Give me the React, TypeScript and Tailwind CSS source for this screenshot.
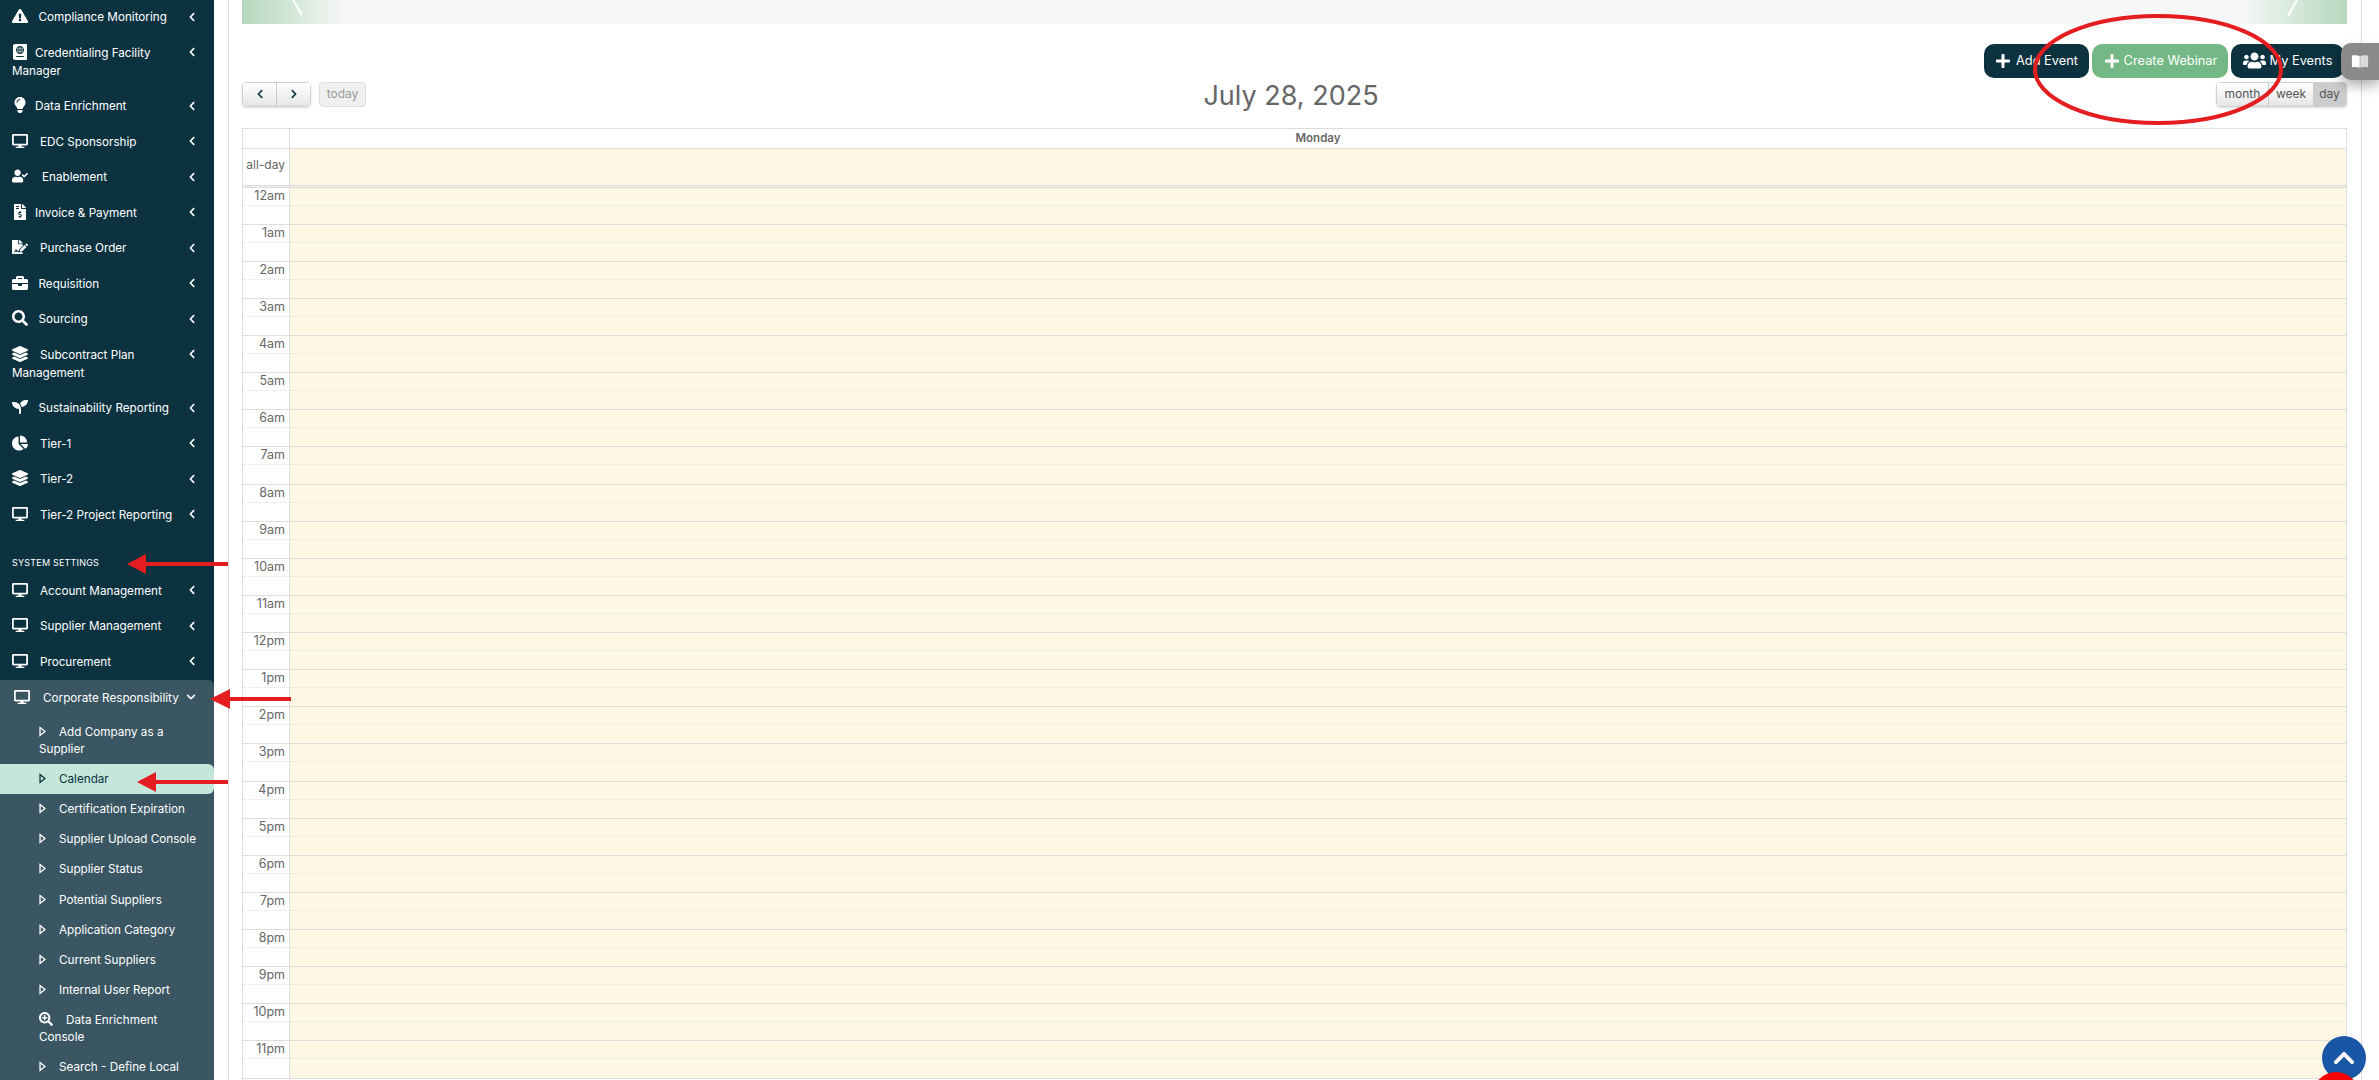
import { IconType } from 'react-icons';
import {
  FaExclamationTriangle, FaPassport, FaLightbulb, FaDesktop, FaUserCheck, FaFileInvoiceDollar,
  FaFileSignature, FaBriefcase, FaSearch, FaLayerGroup, FaSeedling, FaChartPie, FaChevronLeft,
  FaChevronRight, FaChevronDown, FaChevronUp, FaSearchPlus, FaPlus, FaUsers,
} from 'react-icons/fa';

type MenuItem = { label: string; icon: IconType; box: string };

const topItems: MenuItem[] = [
  { label: 'Compliance Monitoring', icon: FaExclamationTriangle, box: 'w-[26.5px]' },
  { label: 'Credentialing Facility Manager', icon: FaPassport, box: 'w-[23px]' },
  { label: 'Data Enrichment', icon: FaLightbulb, box: 'w-[23px]' },
  { label: 'EDC Sponsorship', icon: FaDesktop, box: 'w-[28px]' },
  { label: 'Enablement', icon: FaUserCheck, box: 'w-[30px]' },
  { label: 'Invoice & Payment', icon: FaFileInvoiceDollar, box: 'w-[23px]' },
  { label: 'Purchase Order', icon: FaFileSignature, box: 'w-[28px]' },
  { label: 'Requisition', icon: FaBriefcase, box: 'w-[26.5px]' },
  { label: 'Sourcing', icon: FaSearch, box: 'w-[26.5px]' },
  { label: 'Subcontract Plan Management', icon: FaLayerGroup, box: 'w-[28px]' },
  { label: 'Sustainability Reporting', icon: FaSeedling, box: 'w-[26.5px]' },
  { label: 'Tier-1', icon: FaChartPie, box: 'w-[28px]' },
  { label: 'Tier-2', icon: FaLayerGroup, box: 'w-[28px]' },
  { label: 'Tier-2 Project Reporting', icon: FaDesktop, box: 'w-[28px]' },
];

const settingsItems: MenuItem[] = [
  { label: 'Account Management', icon: FaDesktop, box: 'w-[28px]' },
  { label: 'Supplier Management', icon: FaDesktop, box: 'w-[28px]' },
  { label: 'Procurement', icon: FaDesktop, box: 'w-[28px]' },
];

const subItems = [
  'Add Company as a Supplier',
  'Calendar',
  'Certification Expiration',
  'Supplier Upload Console',
  'Supplier Status',
  'Potential Suppliers',
  'Application Category',
  'Current Suppliers',
  'Internal User Report',
  'Data Enrichment Console',
  'Search - Define Local',
];

const hours = [
  '12am', '1am', '2am', '3am', '4am', '5am', '6am', '7am', '8am', '9am', '10am', '11am',
  '12pm', '1pm', '2pm', '3pm', '4pm', '5pm', '6pm', '7pm', '8pm', '9pm', '10pm', '11pm',
];

function SideLink({ item }: { item: MenuItem }) {
  const Icon = item.icon;
  return (
    <li className="relative pl-3 pr-[30px] py-[8.75px] text-[11.7px] leading-[18px] text-white">
      <span className={`inline-block ${item.box}`}>
        <Icon className="inline-block text-[16px] align-[-3px]" />
      </span>
      {item.label}
      <FaChevronLeft className="absolute left-[187px] top-[12px] text-[10px]" />
    </li>
  );
}

function PlayOutline() {
  return (
    <svg viewBox="0 0 8 12" className="inline-block w-[7px] h-[11px] align-[-1px]" fill="none" stroke="currentColor" strokeWidth="1.5">
      <path d="M1.2 1.5 L6.8 6 L1.2 10.5 Z" />
    </svg>
  );
}

function SubLink({ label, active }: { label: string; active: boolean }) {
  const isZoom = label === 'Data Enrichment Console';
  return (
    <li
      className={
        active
          ? 'pl-[39px] pr-4 py-[6.6px] text-[11.7px] leading-[17px] bg-[#c5e6da] text-[#0c3240] rounded-r-md'
          : 'pl-[39px] pr-4 py-[6.6px] text-[11.7px] leading-[17px] text-white'
      }
    >
      {isZoom ? (
        <span className="inline-block w-[27px]">
          <FaSearchPlus className="inline-block text-[14px] align-[-2px]" />
        </span>
      ) : (
        <span className="inline-block w-[20px]">
          <PlayOutline />
        </span>
      )}
      {label}
    </li>
  );
}

function Sidebar() {
  return (
    <aside className="w-[214px] shrink-0 h-full overflow-hidden bg-[#0c3240]">
      <ul className="-mt-[0.5px]">
        {topItems.map((item) => (
          <SideLink key={item.label} item={item} />
        ))}
      </ul>
      <div className="pl-3 pt-[24.5px] pb-1 text-[9px] leading-3 tracking-[0.2px] text-white">SYSTEM SETTINGS</div>
      <ul>
        {settingsItems.map((item) => (
          <SideLink key={item.label} item={item} />
        ))}
      </ul>
      <div className="bg-[#3a5662] rounded-tr-md">
        <div className="relative pl-[14px] py-[9px] text-[11.7px] leading-[18px] text-white">
          <span className="inline-block w-[29px]">
            <FaDesktop className="inline-block text-[16px] align-[-3px]" />
          </span>
          Corporate Responsibility
          <FaChevronDown className="absolute left-[186px] top-[12px] text-[10px]" />
        </div>
        <ul className="pt-[1.5px]">
          {subItems.map((label) => (
            <SubLink key={label} label={label} active={label === 'Calendar'} />
          ))}
        </ul>
      </div>
    </aside>
  );
}

function Toolbar() {
  return (
    <>
      <div className="mt-[19.5px] h-[34px] flex justify-end gap-[3px] pr-[3px] text-[12.8px] text-white">
        <button className="w-[105px] flex items-center justify-center gap-[5px] rounded-[10px] bg-[#0c3240]">
          <FaPlus className="text-[16px]" />
          Add Event
        </button>
        <button className="w-[136px] flex items-center justify-center gap-[4px] pl-[1px] rounded-[10px] bg-[#74b985]">
          <FaPlus className="text-[16px]" />
          Create Webinar
        </button>
        <button className="w-[113px] flex items-center justify-center gap-[4px] rounded-[10px] bg-[#0c3240]">
          <FaUsers className="text-[23px]" />
          My Events
        </button>
      </div>
      <div className="mt-1 h-[25px] flex justify-between items-center">
        <div className="flex w-[124px]">
          <div className="flex w-[69px] h-[25px] rounded border border-[#d0d0d0] shadow-sm text-[#0c3240]">
            <button className="flex-1 flex items-center justify-center border-r border-[#ccc] bg-gradient-to-b from-white to-[#e6e6e6]">
              <FaChevronLeft className="text-[10px]" />
            </button>
            <button className="flex-1 flex items-center justify-center bg-gradient-to-b from-white to-[#e6e6e6]">
              <FaChevronRight className="text-[10px]" />
            </button>
          </div>
          <button className="ml-2 w-[47px] h-[25px] rounded border border-[#ddd] bg-[#f0f0f0] text-[12px] text-[#999]">today</button>
        </div>
        <h2 className="text-[27px] leading-8 pt-[3px] text-[#666]">July 28, 2025</h2>
        <div className="flex w-[131px] h-[25px] rounded border border-[#d0d0d0] shadow-sm text-[12px] text-[#555]">
          <button className="w-[52px] border-r border-[#ccc] bg-gradient-to-b from-white to-[#e6e6e6]">month</button>
          <button className="w-[44px] bg-gradient-to-b from-white to-[#e6e6e6]">week</button>
          <button className="flex-1 bg-[#cccccc]">day</button>
        </div>
      </div>
    </>
  );
}

function DayCalendar() {
  return (
    <div className="mt-[21.5px] border-x border-t border-[#ddd] text-[12px] text-[#666]">
      <div className="flex h-[18.5px]">
        <div className="w-[47px] border-r border-[#ddd]" />
        <div className="flex-1 text-center text-[11.5px] font-semibold leading-[18px]">Monday</div>
      </div>
      <div className="flex h-[37px] border-t border-[#ddd]">
        <div className="w-[47px] border-r border-[#ddd] text-right pr-1 pt-[8px] leading-4">all-day</div>
        <div className="flex-1 bg-[#fdf7e4]" />
      </div>
      <div className="h-[2px] border-t border-[#ddd] bg-[#eee]" />
      {hours.map((hour) => (
        <div key={hour} className="flex h-[37.14px] border-t border-[#ddd]">
          <div className="w-[47px] border-r border-[#ddd] text-right">
            <div className="h-1/2 pr-1 text-[12.5px] leading-[15px] border-b border-dotted border-[#e4e4e4]">{hour}</div>
          </div>
          <div className="flex-1 bg-[#fdf7e4]">
            <div className="h-1/2 border-b border-dotted border-[#e4e4e4]" />
          </div>
        </div>
      ))}
      <div className="h-[4px] border-t border-[#ddd]" />
    </div>
  );
}

export default function App() {
  return (
    <div className="relative flex h-[1080px] w-[2379px] overflow-hidden bg-white font-['Inter',sans-serif]">
      <Sidebar />
      <main className="ml-[14px] w-[2134px] h-full overflow-hidden border-x border-[#ddd] pl-[13px] pr-[14px]">
        <div className="h-6 bg-[linear-gradient(90deg,#b5d8bd_0%,#d5e8da_2.5%,#f7f7f7_5%,#f7f7f7_95%,#d5e8da_97.5%,#b5d8bd_100%)]" />
        <Toolbar />
        <DayCalendar />
      </main>

      {/* book widget pinned over the right edge */}
      <div className="absolute left-[2341px] top-[43px] w-[38px] h-[37px] rounded-l-[10px] bg-[#8a8a8a] shadow-[0_6px_12px_rgba(0,0,0,0.3)] flex items-center justify-center">
        <svg viewBox="0 0 20 16" className="w-[18px] h-[15px]">
          <path d="M1 1.5 C4 .8 7 .8 9.7 2 V15 C7 14 4 14 1 14.6 Z" fill="#fff" />
          <path d="M10.3 2 C13 .8 16 .8 19 1.5 V14.6 C16 14 13 14 10.3 15 Z" fill="#d9d9d9" />
        </svg>
      </div>

      {/* scroll to top */}
      <div className="absolute left-[2322px] top-[1036px] w-[44px] h-[44px] rounded-full bg-[#1a56a6] flex items-center justify-center text-white">
        <FaChevronUp className="text-[24px]" />
      </div>

      {/* red markup drawn on the screenshot, plus banner streaks */}
      <svg className="absolute inset-0 pointer-events-none" width="2379" height="1080" viewBox="0 0 2379 1080">
        <path d="M293 0 L302 15" stroke="#fff" strokeWidth="2" />
        <path d="M2297 0 L2288 16" stroke="#fff" strokeWidth="2" />
        <ellipse cx="2158" cy="69.5" rx="123" ry="53.5" fill="none" stroke="#e41e20" strokeWidth="4" />
        <path d="M228 564 H146" stroke="#e41e20" strokeWidth="4" />
        <path d="M127 564 L146 554 V574 Z" fill="#e41e20" />
        <path d="M291 699 H230" stroke="#e41e20" strokeWidth="4" />
        <path d="M210 699 L230 689 V709 Z" fill="#e41e20" />
        <path d="M228 782 H156" stroke="#e41e20" strokeWidth="4" />
        <path d="M137 782 L156 772 V792 Z" fill="#e41e20" />
        <circle cx="2336" cy="1095" r="23" fill="#ff0000" />
      </svg>
    </div>
  );
}
